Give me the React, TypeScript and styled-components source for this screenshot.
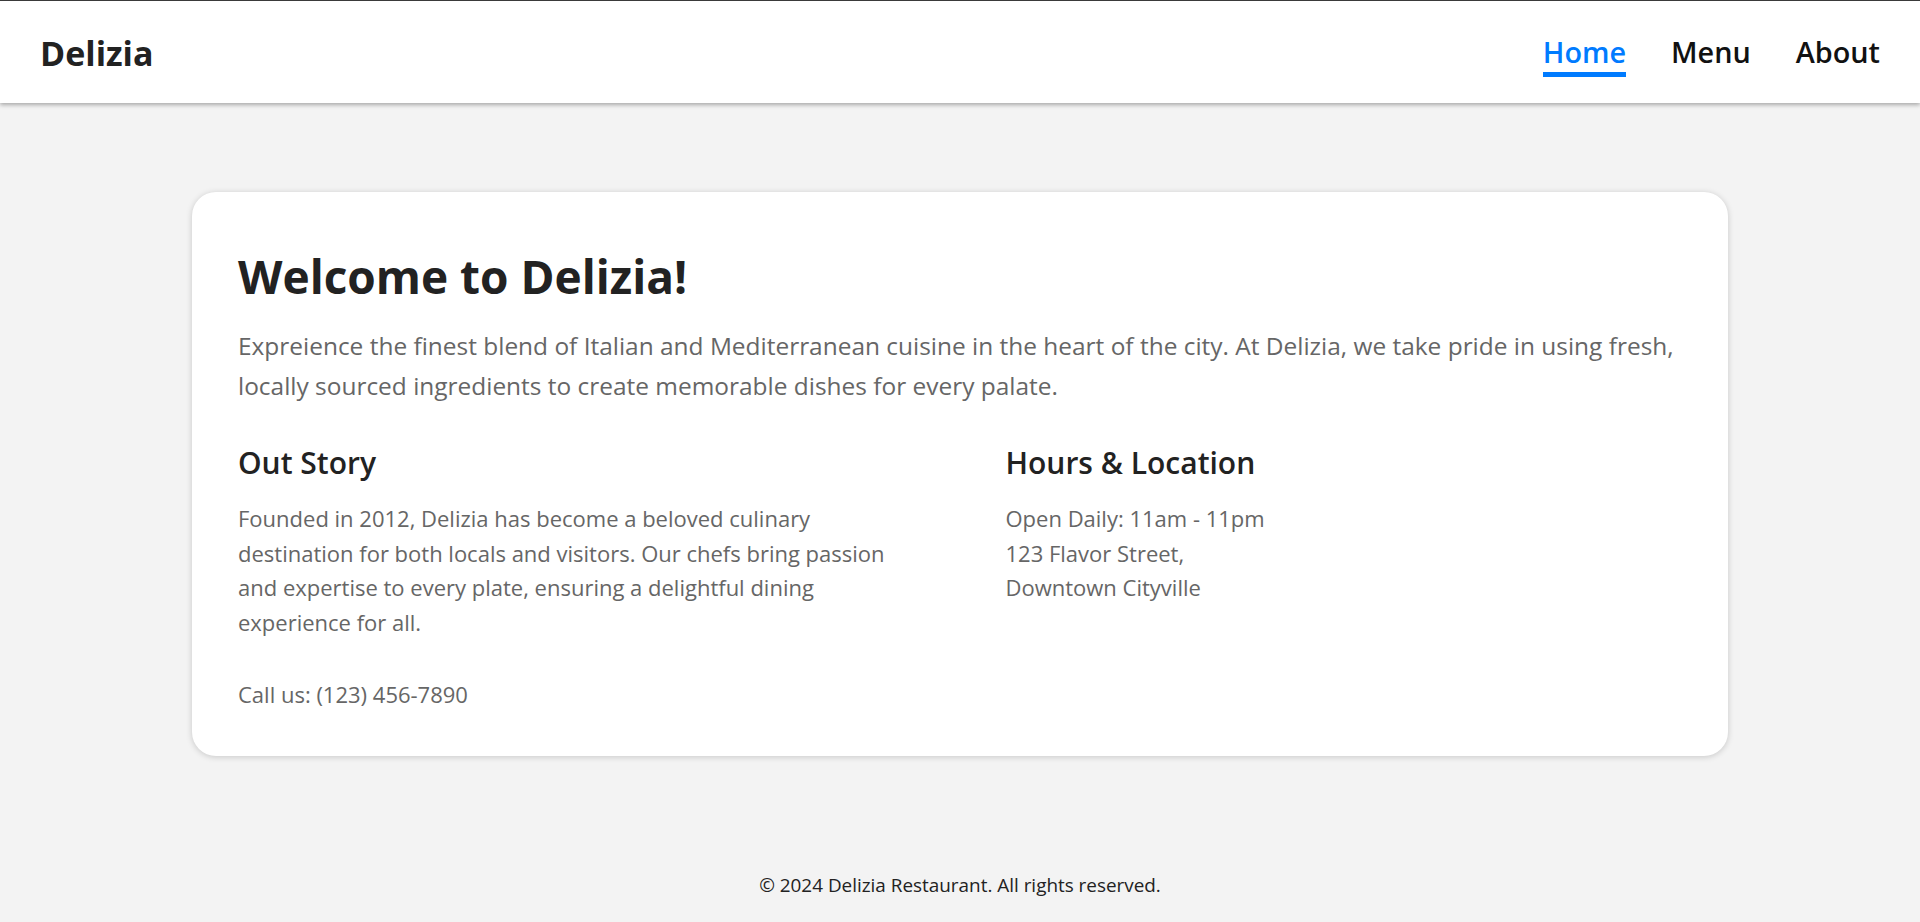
import React from "react";
import styled, { createGlobalStyle } from "styled-components";

const Global = createGlobalStyle`
  html, body { margin: 0; padding: 0; }
  body {
    background: #f3f3f3;
    font-family: "Segoe UI", "Open Sans", sans-serif;
    color: #222;
  }
  * { box-sizing: border-box; }
`;

const Page = styled.div`
  min-height: 922px;
  display: flex;
  flex-direction: column;
`;

const Header = styled.header`
  height: 103px;
  background: #fff;
  border-top: 1px solid #3a3a3a;
  box-shadow: 0 2px 4px rgba(0, 0, 0, 0.3);
  display: flex;
  justify-content: space-between;
  align-items: flex-start;
  padding: 32px 40px 0 40px;
  position: relative;
  z-index: 1;
`;

const Logo = styled.div`
  font-size: 34px;
  line-height: 40.8px;
  font-weight: 700;
  color: #222;
`;

const Nav = styled.nav`
  display: flex;
  gap: 45px;
  margin-top: 2px;
`;

const NavLink = styled.a<{ $active?: boolean }>`
  font-size: 28.8px;
  line-height: 34px;
  font-weight: 600;
  text-decoration: none;
  color: ${(p) => (p.$active ? "#007bff" : "#111")};
  padding-bottom: 3px;
  border-bottom: 5px solid ${(p) => (p.$active ? "#007bff" : "transparent")};
  cursor: pointer;
`;

const Main = styled.main`
  padding: 89px 192px 0 192px;
`;

const Card = styled.section`
  background: #fff;
  border-radius: 24px;
  box-shadow: 0 1px 6px rgba(0, 0, 0, 0.18);
  padding: 46px 46px 44px 46px;
`;

const Title = styled.h1`
  margin: 12px 0 0 0;
  font-size: 46px;
  line-height: 52px;
  font-weight: 700;
  color: #222;
`;

const Intro = styled.p`
  margin: 24px 0 0 0;
  font-size: 24.45px;
  line-height: 39.6px;
  color: #666;
`;

const Columns = styled.div`
  display: grid;
  grid-template-columns: 1fr 1fr;
  column-gap: 91px;
  margin-top: 40px;
`;

const Column = styled.div`
  display: flex;
  flex-direction: column;
  padding-right: 20px;
`;

const SubTitle = styled.h2`
  margin: 0;
  font-size: 30px;
  line-height: 36px;
  font-weight: 600;
  color: #222;
`;

const Text = styled.p`
  margin: 20px 0 0 0;
  font-size: 22px;
  line-height: 34.56px;
  color: #666;
`;

const CallUs = styled(Text)`
  margin-top: 38px;
`;

const Footer = styled.footer`
  margin-top: auto;
  padding: 0 0 23px 0;
  text-align: center;
  font-size: 18.9px;
  line-height: 27px;
  color: #222;
`;

export default function App() {
  return (
    <>
      <Global />
      <Page>
        <Header>
          <Logo>Delizia</Logo>
          <Nav>
            <NavLink $active>Home</NavLink>
            <NavLink>Menu</NavLink>
            <NavLink>About</NavLink>
          </Nav>
        </Header>
        <Main>
          <Card>
            <Title>Welcome to Delizia!</Title>
            <Intro>
              Expreience the finest blend of Italian and Mediterranean cuisine in the heart of the city. At
              Delizia, we take pride in using fresh, locally sourced ingredients to create memorable dishes for
              every palate.
            </Intro>
            <Columns>
              <Column>
                <SubTitle>Out Story</SubTitle>
                <Text>
                  Founded in 2012, Delizia has become a beloved culinary destination for both locals and
                  visitors. Our chefs bring passion and expertise to every plate, ensuring a delightful dining
                  experience for all.
                </Text>
              </Column>
              <Column>
                <SubTitle>Hours &amp; Location</SubTitle>
                <Text>
                  Open Daily: 11am - 11pm
                  <br />
                  123 Flavor Street,
                  <br />
                  Downtown Cityville
                </Text>
              </Column>
            </Columns>
            <CallUs>Call us: (123) 456-7890</CallUs>
          </Card>
        </Main>
        <Footer>© 2024 Delizia Restaurant. All rights reserved.</Footer>
      </Page>
    </>
  );
}
